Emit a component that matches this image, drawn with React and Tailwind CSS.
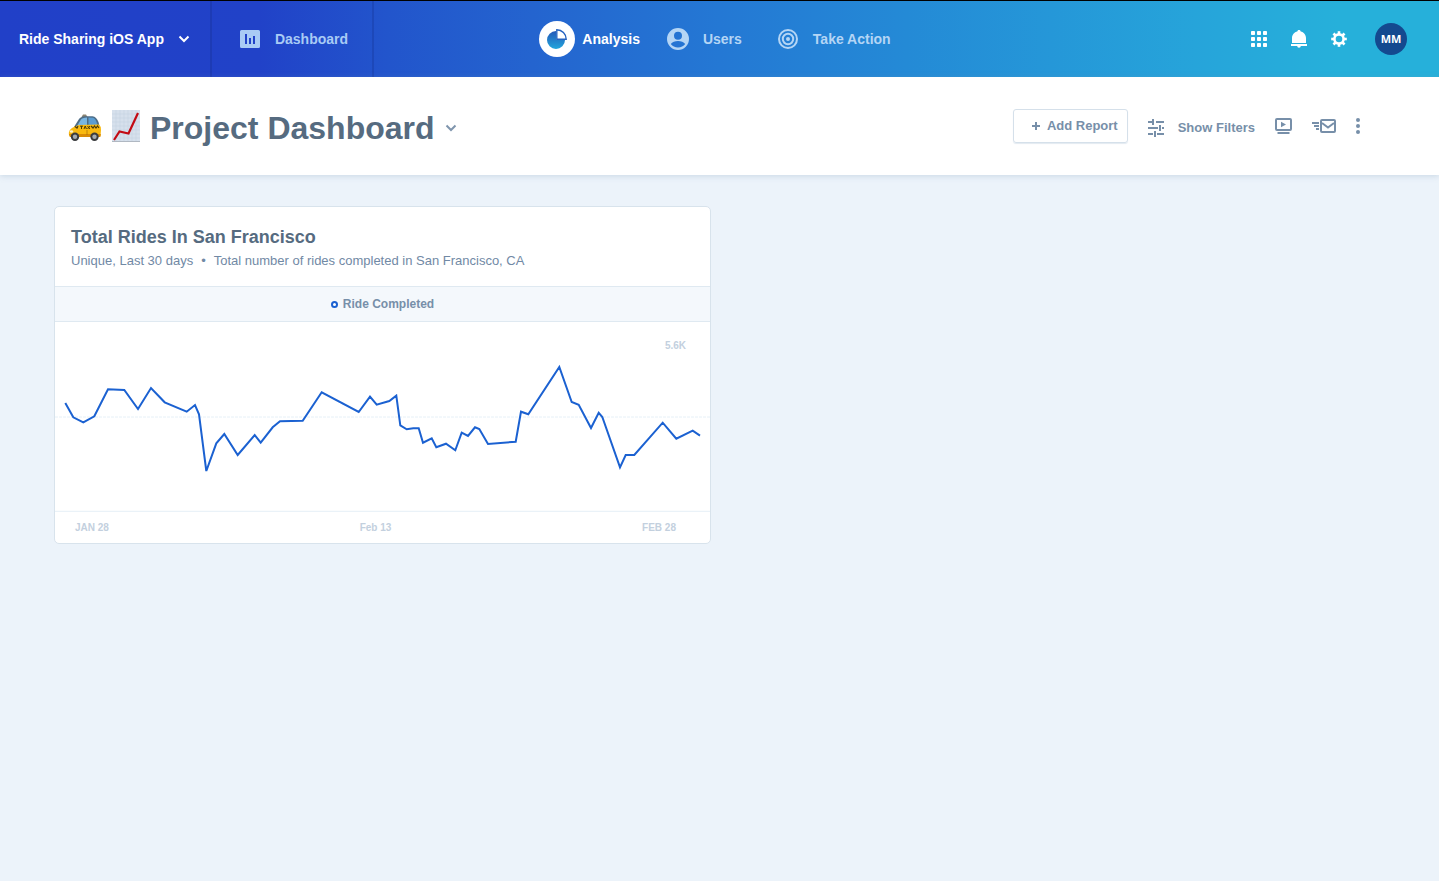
const linePoints =
  "10.3,81 18.3,95.3 28.3,100.3 39.3,94.3 53,67.3 69.3,68 83,87 96,66 109.7,80.3 131.7,89.7 140,83 144,92.3 151.3,149 161.3,121.3 169.3,112 182.7,133 199.7,113 205.7,120.7 217.7,105.3 225,99.3 247.7,98.7 266.7,70.3 303.7,90 315,74.7 321.7,82.7 334.3,79 341.3,73.7 345.3,103.3 351.7,107.3 358.3,106.3 363.7,106.3 368,120.7 376.7,116.3 381.3,125.3 391,121.7 400.3,128.3 406.7,110.7 413,114 420,105.3 424.3,107 433,122 460.7,119.7 466,89.7 473.3,92.3 504.3,45 516.7,80 523.7,82.7 536,106 543.7,90.7 547.3,95 565,145.3 570.7,133 579.3,133 607.7,100.7 621.3,116.7 637.7,108.7 645,113.7";

function Chevron({ className, strokeWidth }) {
  return (
    <svg className={className} viewBox="0 0 12 8" fill="none" stroke="currentColor" strokeWidth={strokeWidth} aria-hidden="true">
      <path d="M1.5 1.5 L6 6 L10.5 1.5" />
    </svg>
  );
}

function DashboardIcon() {
  return (
    <svg className="h-[18px] w-5" viewBox="0 0 20 18" aria-hidden="true">
      <path
        fill="currentColor"
        fillRule="evenodd"
        d="M1.5 0h17A1.5 1.5 0 0 1 20 1.5v15a1.5 1.5 0 0 1-1.5 1.5h-17A1.5 1.5 0 0 1 0 16.500v-15A1.5 1.5 0 0 1 1.5 0zM5 4v10h2V4zM9 8v6h2V8zM13 6v8h2V6z"
      />
    </svg>
  );
}

function PieIcon() {
  return (
    <svg className="size-9" viewBox="0 0 36 36" aria-hidden="true">
      <defs>
        <linearGradient id="pie" x1="0" y1="0" x2="0" y2="1">
          <stop offset="0" stopColor="#2458b8" />
          <stop offset="1" stopColor="#22a6dc" />
        </linearGradient>
      </defs>
      <circle cx="18" cy="18" r="18" fill="#fff" />
      <path d="M17 10a9 9 0 1 0 9 9h-9z" fill="url(#pie)" />
      <path d="M17.800 8.800v9.400h9.400a9.400 9.400 0 0 0-9.400-9.400z" fill="#fff" stroke="#2462c0" strokeWidth="1.400" />
    </svg>
  );
}

function UserIcon() {
  return (
    <svg className="size-[22px]" viewBox="0 0 22 22" aria-hidden="true">
      <path
        fill="currentColor"
        fillRule="evenodd"
        d="M11 0a11 11 0 1 0 0 22 11 11 0 0 0 0-22zm0 3.700a4 4 0 1 1 0 8 4 4 0 0 1 0-8zM3.800 16c1.400-2 4.200-3 7.200-3s5.800 1 7.200 3c-1.600 2.200-4.200 3.500-7.200 3.500S5.400 18.200 3.800 16z"
      />
    </svg>
  );
}

function TargetIcon() {
  return (
    <svg className="size-5" viewBox="0 0 20 20" fill="none" stroke="currentColor" strokeWidth="2" aria-hidden="true">
      <circle cx="10" cy="10" r="9" />
      <circle cx="10" cy="10" r="5.200" />
      <circle cx="10" cy="10" r="2" fill="currentColor" stroke="none" />
    </svg>
  );
}

function GridIcon() {
  return (
    <svg className="size-4" viewBox="0 0 16 16" fill="currentColor" aria-hidden="true">
      {[0, 6, 12].map((y) =>
        [0, 6, 12].map((x) => <rect key={`${x}-${y}`} x={x} y={y} width="4" height="4" rx="0.800" />)
      )}
    </svg>
  );
}

function BellIcon() {
  return (
    <svg className="h-[18px] w-4" viewBox="0 0 16 18" fill="currentColor" aria-hidden="true">
      <path d="M8 0c1 0 1.700.6 1.700 1.500C12.700 2.200 15 4.700 15 8v5H1V8c0-3.300 2.300-5.800 5.300-6.500C6.300.6 7 0 8 0z" />
      <path d="M0 14h16v2h-6.200a1.800 1.800 0 0 1-3.600 0H0z" />
    </svg>
  );
}

function GearIcon() {
  return (
    <svg className="size-4" viewBox="0 0 16 16" fill="none" stroke="currentColor" aria-hidden="true">
      <circle cx="8" cy="8" r="4.600" strokeWidth="2.600" />
      {[0, 45, 90, 135, 180, 225, 270, 315].map((angle) => (
        <path key={angle} d="M8 3V0.200" strokeWidth="2.600" transform={`rotate(${angle} 8 8)`} />
      ))}
    </svg>
  );
}

function TaxiEmoji() {
  return (
    <svg className="h-8 w-[34px]" viewBox="0 0 34 32" role="img" aria-label="Taxi">
      <path d="M13.500 7l1.500-2.500h3L19.500 7z" fill="#8b8371" />
      <path d="M6 17 L11 9 Q12.500 6.600 17 6.200 L24.500 6.200 Q28.500 6.700 30.500 12 L32 18z" fill="#4d6c86" />
      <path d="M9 16 L13 9.500 Q14 8 19 7.600 L19 16z" fill="#79b6e2" />
      <path d="M20.500 7.600 L25 7.800 Q28 8.500 29.500 15.500 L20.500 16z" fill="#5b9dd2" />
      <path d="M1 25 Q0 20.500 4 18 Q7 16 11 15 L31 14.500 Q33 16 33 20 L32.500 26 L2 27z" fill="#f9b90f" />
      <path d="M1 24h31.800l-.4 3H2z" fill="#d98b06" />
      <path d="M7 16.500l2 1.500 1-2M23 16l2 2 1.500-2 1.500 2 1.500-2 1.500 2" fill="none" stroke="#4b3b09" strokeWidth="1.200" />
      <path d="M12 16.200h3M13.500 16v3M16 19l1.200-3 1.200 3M19.500 16l2.500 3M22 16l-2.500 3" fill="none" stroke="#4b3b09" strokeWidth="1" />
      <ellipse cx="3.500" cy="21.500" rx="1.700" ry="1.300" fill="#fff3c6" />
      <path d="M19 20v5" stroke="#a86f08" strokeWidth=".7" />
      <circle cx="7" cy="26.800" r="4.200" fill="#3a3c3e" />
      <circle cx="7" cy="26.800" r="2.200" fill="#a6abb0" />
      <circle cx="26.500" cy="26.800" r="4.200" fill="#3a3c3e" />
      <circle cx="26.500" cy="26.800" r="2.200" fill="#a6abb0" />
    </svg>
  );
}

function ChartEmoji() {
  return (
    <svg className="h-8 w-7" viewBox="0 0 28 32" role="img" aria-label="Chart increasing">
      <rect width="28" height="32" fill="#d6e0ec" />
      <path
        d="M4 0v32M8 0v32M12 0v32M16 0v32M20 0v32M24 0v32M0 4h28M0 8h28M0 12h28M0 16h28M0 20h28M0 24h28M0 28h28"
        stroke="#c6d3e2"
        strokeWidth=".6"
      />
      <path d="M0 31.500h28" stroke="#b0b8c2" />
      <path d="M2 30 L7.500 21.500 L16.500 23.500 L26 3" fill="none" stroke="#c30b14" strokeWidth="2.200" />
    </svg>
  );
}

function FiltersIcon() {
  return (
    <svg className="h-[18px] w-4" viewBox="0 0 16 18" fill="none" stroke="currentColor" strokeWidth="2" aria-hidden="true">
      <path d="M0 3h6M8 3h8M5 0v6M0 9h10M14 9h2M12 6v6M0 15h5M9 15h7M7 12v6" />
    </svg>
  );
}

function PresentIcon() {
  return (
    <svg className="h-4 w-[17px]" viewBox="0 0 17 16" aria-hidden="true">
      <rect x="1" y="1" width="15" height="11" rx="1" fill="none" stroke="currentColor" strokeWidth="2" />
      <path d="M6 3.800v5.400L11 6.500z" fill="currentColor" />
      <path d="M2.500 15h12" stroke="currentColor" strokeWidth="2" />
    </svg>
  );
}

function SendIcon() {
  return (
    <svg className="h-[14px] w-6" viewBox="0 0 24 14" fill="none" stroke="currentColor" aria-hidden="true">
      <rect x="9" y="1" width="14" height="12" rx="1" strokeWidth="2" />
      <path d="M10 4l6 4.500L22 4" strokeWidth="2" />
      <path d="M0 4h7M2 7h5M4 10h3" strokeWidth="2" />
    </svg>
  );
}

function DotsIcon() {
  return (
    <svg className="h-4 w-1" viewBox="0 0 4 16" fill="currentColor" aria-hidden="true">
      <circle cx="2" cy="2" r="2" />
      <circle cx="2" cy="8" r="2" />
      <circle cx="2" cy="14" r="2" />
    </svg>
  );
}

function Header() {
  return (
    <header className="grid h-[77px] grid-cols-[1fr_auto_1fr] border-t border-black bg-[linear-gradient(90deg,#2140c8_0%,#2142c8_18%,#2255cc_27%,#2464cf_37%,#2478d4_50%,#248ad6_63%,#26a4da_83%,#26b0da_93%)] text-sm font-bold text-white">
      <div className="flex">
        <button type="button" className="flex items-center gap-[14px] border-r-2 border-[#1d3bb5] pr-5 pl-[19px]">
          Ride Sharing iOS App
          <Chevron className="h-2 w-3" strokeWidth="2" />
        </button>
        <a href="#dashboard" className="flex items-center gap-[15px] border-r-2 border-[#1d48b9] pr-6 pl-7 text-[#a9cbf5]">
          <DashboardIcon />
          Dashboard
        </a>
      </div>
      <nav className="flex items-center pr-[9px] text-[#b4d5f5]" aria-label="Main">
        <a href="#analysis" className="flex items-center gap-[7px] text-white" aria-current="page">
          <PieIcon />
          Analysis
        </a>
        <a href="#users" className="ml-[27px] flex items-center gap-[14px]">
          <UserIcon />
          Users
        </a>
        <a href="#action" className="ml-9 flex items-center gap-[15px]">
          <TargetIcon />
          Take Action
        </a>
      </nav>
      <div className="flex items-center justify-end gap-6 pr-8">
        <button type="button" aria-label="Apps">
          <GridIcon />
        </button>
        <button type="button" aria-label="Notifications">
          <BellIcon />
        </button>
        <button type="button" aria-label="Settings">
          <GearIcon />
        </button>
        <button type="button" className="ml-1 size-8 rounded-full bg-[#14498f] font-['Open_Sans',sans-serif] text-[11px]">
          MM
        </button>
      </div>
    </header>
  );
}

function TitleBar() {
  return (
    <div className="relative flex h-[98px] items-center justify-between bg-white pr-[79px] pl-[68px] shadow-[0_1px_6px_rgba(120,150,180,0.3)]">
      <div className="flex items-center gap-[10px]">
        <TaxiEmoji />
        <ChartEmoji />
        <div className="flex items-center gap-[10px] pt-1">
          <h1 className="text-[32px] leading-10 font-bold text-[#566b80]">Project Dashboard</h1>
          <button type="button" aria-label="Switch dashboard" className="text-[#7f95ad]">
            <Chevron className="h-2 w-3" strokeWidth="2" />
          </button>
        </div>
      </div>
      <div className="flex items-center text-[13px] font-bold text-[#778fa9]">
        <button
          type="button"
          className="flex h-[34px] items-center gap-[7px] rounded-[3px] border border-[#d5e0ea] pr-[9px] pl-[18px] shadow-[0_1px_1px_#e3eaf1]"
        >
          <svg className="size-2" viewBox="0 0 8 8" stroke="currentColor" strokeWidth="2" aria-hidden="true">
            <path d="M4 0v8M0 4h8" />
          </svg>
          Add Report
        </button>
        <button type="button" className="ml-5 flex items-center gap-[14px] pt-1">
          <FiltersIcon />
          Show Filters
        </button>
        <button type="button" aria-label="Present" className="ml-5">
          <PresentIcon />
        </button>
        <button type="button" aria-label="Email" className="ml-5">
          <SendIcon />
        </button>
        <button type="button" aria-label="More" className="ml-5">
          <DotsIcon />
        </button>
      </div>
    </div>
  );
}

function RidesCard() {
  return (
    <section className="rounded-[5px] border border-[#d8e3ec] bg-white">
      <div className="px-4 pt-[18px] pb-[13px]">
        <h2 className="text-lg leading-6 font-bold text-[#566b80]">Total Rides In San Francisco</h2>
        <p className="flex gap-2 text-[13px] leading-6 text-[#7189a5]">
          <span>Unique, Last 30 days</span>
          <span>•</span>
          <span>Total number of rides completed in San Francisco, CA</span>
        </p>
      </div>
      <div className="flex h-9 items-center justify-center gap-[5px] border-y border-[#dfe9f1] bg-[#f4f8fc] text-xs font-bold text-[#778fa9]">
        <span className="size-[7px] rounded-full border-2 border-[#1b61d1] bg-white" />
        Ride Completed
      </div>
      <div className="relative text-[10px] leading-4 font-bold text-[#c3d0de]">
        <span className="absolute top-4 right-6">5.6K</span>
        <svg className="block h-auto w-full" viewBox="0 0 655 190" fill="none" role="img" aria-label="Rides completed per day">
          <path d="M0 95H655" stroke="#e6f0f7" strokeDasharray="3 1" />
          <path d="M0 189.500H655" stroke="#eaf2f8" strokeWidth="1.500" />
          <polyline points={linePoints} stroke="#1b61d1" strokeWidth="2" />
        </svg>
        <div className="flex justify-between pt-2 pr-[34px] pb-[7px] pl-5">
          <span>JAN 28</span>
          <span>Feb 13</span>
          <span>FEB 28</span>
        </div>
      </div>
    </section>
  );
}

export default function App() {
  return (
    <div className="min-h-screen bg-[#ecf3fa] font-['Liberation_Sans',Arial,sans-serif]">
      <Header />
      <TitleBar />
      <main className="grid grid-cols-2 gap-[17px] px-[54px] py-[31px]">
        <RidesCard />
      </main>
    </div>
  );
}
